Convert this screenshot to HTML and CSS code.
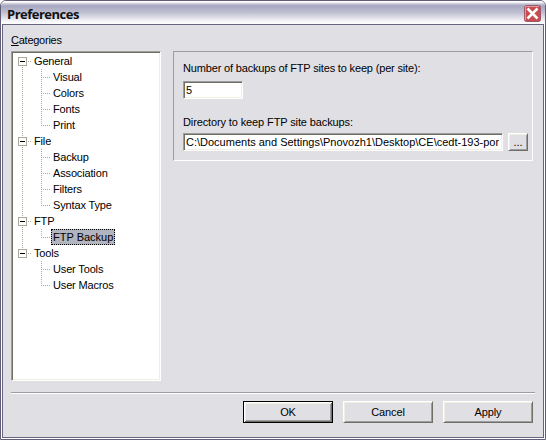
FILE: index.html
```html
<!DOCTYPE html>
<html lang="en">
<head>
<meta charset="utf-8">
<title>Preferences</title>
<link rel="stylesheet" href="styles.css">
</head>
<body>
<main class="window">
  <header class="titlebar">
    <h1>Preferences</h1>
    <button class="close" aria-label="Close"><svg width="17" height="17" viewBox="0 0 17 17"><rect x=".5" y=".5" width="16" height="16" rx="2" fill="#c64c50" stroke="#a0566a"/><path d="M1.5 15V1.5H15" fill="none" stroke="#e09a9e"/><path d="M3.5 3.5l10 10M13.500 3.500l-10 10" stroke="#fff" stroke-width="2.500"/></svg></button>
  </header>
  <div class="client">
    <div class="label categories"><u>C</u>ategories</div>
    <div class="body">
      <ul class="tree">
        <li class="root"><i class="toggle"></i><span>General</span></li>
        <li class="child"><span>Visual</span></li>
        <li class="child"><span>Colors</span></li>
        <li class="child"><span>Fonts</span></li>
        <li class="child last"><span>Print</span></li>
        <li class="root"><i class="toggle"></i><span>File</span></li>
        <li class="child"><span>Backup</span></li>
        <li class="child"><span>Association</span></li>
        <li class="child"><span>Filters</span></li>
        <li class="child last"><span>Syntax Type</span></li>
        <li class="root"><i class="toggle"></i><span>FTP</span></li>
        <li class="child last"><span class="selected">FTP Backup</span></li>
        <li class="root final"><i class="toggle"></i><span>Tools</span></li>
        <li class="child end"><span>User Tools</span></li>
        <li class="child end last"><span>User Macros</span></li>
      </ul>
      <section class="group">
        <div class="label count">Number of backups of FTP sites to keep (per site):</div>
        <div class="field short">5</div>
        <div class="label dir">Directory to keep FTP site backups:</div>
        <div class="row">
          <div class="field path"><span>C:\Documents and Settings\Pnovozh1\Desktop\CE\cedt-193-por</span></div>
          <button class="btn browse">...</button>
        </div>
      </section>
    </div>
    <div class="rule"></div>
    <footer class="actions">
      <button class="btn default">OK</button>
      <button class="btn">Cancel</button>
      <button class="btn">Apply</button>
    </footer>
  </div>
</main>
</body>
</html>
```

FILE: styles.css
```css
* { box-sizing: border-box; margin: 0; padding: 0; }
body { width: 546px; height: 440px; overflow: hidden; background: #fff; font: 11px/16px "Liberation Sans", Arial, sans-serif; color: #000; }
.window { width: 546px; height: 440px; border: 1px solid #5f5d78; border-radius: 6px 6px 0 0; background: #fff; padding: 0 1px 1px; overflow: hidden; }
.titlebar { height: 23px; margin: 0 -1px; padding: 4px 4px 0 6px; display: flex; justify-content: space-between; background: linear-gradient(#fff 0, #fff 1px, #c3c3d5 3px, #a6a6c0 5px, #c2c2d3 12px, #f4f4f8 20px, #fff 23px); }
h1 { font: bold 13px/18px "Open Sans", sans-serif; letter-spacing: -.5px; color: #111; }
.close { width: 17px; height: 17px; border: 0; background: none; display: block; }
.close svg { display: block; }
.client { height: 414px; border: 1px solid #66647f; background: #e0dfe4; padding: 7px 8px 0; }
.label { white-space: nowrap; }
.categories { height: 19px; letter-spacing: -.25px; }
.body { display: flex; gap: 12px; align-items: flex-start; }
.tree { width: 150px; height: 330px; list-style: none; background: #fff; border: 1px solid; border-color: #9d9da1 #fff #fff #9d9da1; box-shadow: inset 1px 1px #716f64, inset -1px -1px #f1efe2; padding: 1px; letter-spacing: -.15px; }
.tree li { height: 16px; display: flex; align-items: center; white-space: nowrap; --dots: repeating-linear-gradient(#aca899 0 1px, transparent 1px 2px); --hdots: repeating-linear-gradient(90deg, #aca899 0 1px, transparent 1px 2px); background-repeat: no-repeat; }
.root { padding-left: 5px; background-image: var(--dots), var(--hdots); background-size: 1px 16px, 4px 1px; background-position: 9px 0, 15px 8px; }
.root:first-child { background-size: 1px 4px, 4px 1px; background-position: 9px 12px, 15px 8px; }
.root.final { background-size: 1px 8px, 4px 1px; }
.root span { margin-left: 7px; }
.toggle { width: 9px; height: 9px; border: 1px solid #aca899; background: linear-gradient(#000, #000) 1px 3px / 5px 1px no-repeat #fff; }
.child { padding-left: 38px; background-image: var(--dots), var(--dots), var(--hdots); background-size: 1px 16px, 1px 16px, 10px 1px; background-position: 9px 0, 28px 0, 28px 8px; }
.child.last { background-size: 1px 16px, 1px 8px, 10px 1px; }
.child.end { background-size: 0 0, 1px 16px, 10px 1px; }
.child.end.last { background-size: 0 0, 1px 8px, 10px 1px; }
.child span { padding: 0 2px; height: 16px; }
.child .selected { background: #b2b4bf; outline: 1px dotted #000; outline-offset: -1px; width: 64px; letter-spacing: 0; }
.group { width: 360px; height: 110px; border: 1px solid; border-color: #9d9da1 #fff #fff #9d9da1; padding: 8px 4px 0 9px; }
.count { height: 21px; letter-spacing: -.165px; }
.field { height: 18px; background: #fff; border: 1px solid; border-color: #9d9da1 #fff #fff #9d9da1; box-shadow: inset 1px 1px #716f64, inset -1px -1px #f1efe2; padding: 0 3px 0 2px; overflow: hidden; white-space: nowrap; }
.short { width: 60px; }
.dir { margin-top: 15px; height: 19px; letter-spacing: -.12px; }
.row { display: flex; gap: 5px; }
.path { width: 320px; }
.rule { height: 2px; margin-top: 11px; background: linear-gradient(#9d9da1 50%, #fff 50%); width: 524px; }
.actions { display: flex; gap: 10px; justify-content: flex-end; padding: 7px 2px 0 0; }
.btn { width: 90px; height: 22px; font: inherit; letter-spacing: -.1px; background: #e0dfe4; border: 1px solid; border-color: #fff #716f64 #716f64 #fff; box-shadow: inset 1px 1px #f1efe2, inset -1px -1px #9d9da1; }
.default { border-color: #000; box-shadow: inset 1px 1px #fff, inset -1px -1px #716f64, inset 2px 2px #f1efe2, inset -2px -2px #9d9da1; }
.browse { width: 20px; height: 18px; line-height: 12px; }
```
